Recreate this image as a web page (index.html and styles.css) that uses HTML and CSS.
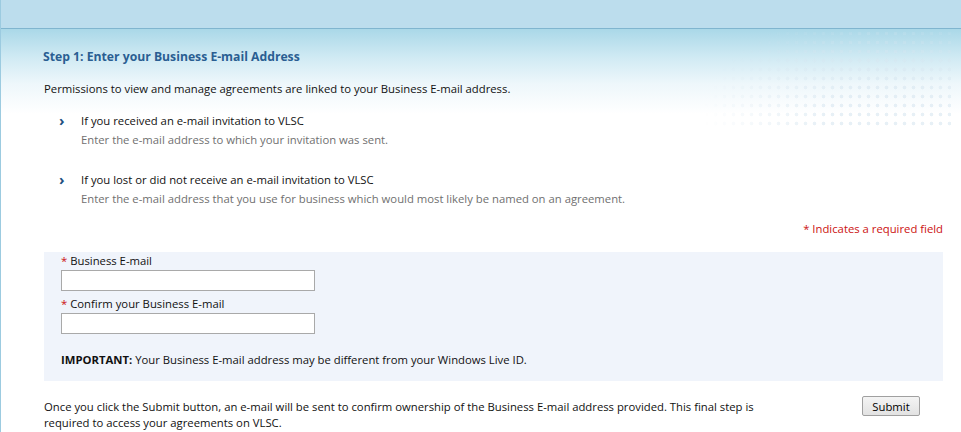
FILE: index.html
```html
<!DOCTYPE html>
<html>
<head>
<meta charset="utf-8">
<link rel="stylesheet" href="styles.css">
</head>
<body>
<div class="topbar"></div>
<div class="content">
  <h1 class="step-title">Step 1: Enter your Business E-mail Address</h1>
  <p class="intro">Permissions to view and manage agreements are linked to your Business E-mail address.</p>
  <ul class="options">
    <li class="option">
      <span class="chev">&#x203A;</span>
      <div class="option-text">
        <div class="option-title">If you received an e-mail invitation to VLSC</div>
        <div class="option-sub">Enter the e-mail address to which your invitation was sent.</div>
      </div>
    </li>
    <li class="option">
      <span class="chev">&#x203A;</span>
      <div class="option-text">
        <div class="option-title">If you lost or did not receive an e-mail invitation to VLSC</div>
        <div class="option-sub">Enter the e-mail address that you use for business which would most likely be named on an agreement.</div>
      </div>
    </li>
  </ul>
  <div class="required-note">* Indicates a required field</div>
  <div class="form-box">
    <label class="field-label"><span class="req">*</span> Business E-mail</label>
    <input class="field-input" type="text">
    <label class="field-label"><span class="req">*</span> Confirm your Business E-mail</label>
    <input class="field-input" type="text">
    <p class="important"><b>IMPORTANT:</b> Your Business E-mail address may be different from your Windows Live ID.</p>
  </div>
  <div class="footer-row">
    <p class="footer-text">Once you click the Submit button, an e-mail will be sent to confirm ownership of the Business E-mail address provided. This final step is required to access your agreements on VLSC.</p>
    <button class="submit-btn" type="button">Submit</button>
  </div>
</div>
</body>
</html>
```
FILE: styles.css
```css
* { box-sizing: border-box; }
html, body { margin: 0; padding: 0; }
body {
  font-family: "Open Sans", "Noto Sans", sans-serif;
  font-size: 11.3px;
  color: #111;
  background: #fff;
  width: 961px;
  height: 432px;
  overflow: hidden;
  border-left: 1px solid #9ccbe0;
}
.topbar {
  height: 29px;
  background: #bcdded;
  border-bottom: 1px solid #80b5cf;
}
.content {
  position: relative;
  padding: 18px 18px 0 42px;
  background: linear-gradient(#aad8e8 0px, #d2ebf4 30px, #eef7fb 55px, #fff 85px);
  background-repeat: no-repeat;
  background-size: 100% 100px;
}
.content::before {
  content: "";
  position: absolute;
  right: 10px;
  top: 0;
  width: 330px;
  height: 100px;
  background-image: radial-gradient(circle, rgba(215,230,240,0.6) 1.6px, transparent 2.1px);
  background-size: 9px 9px;
  -webkit-mask-image: radial-gradient(ellipse 230px 140px at 80% 90%, #000 25%, transparent 80%);
  mask-image: radial-gradient(ellipse 230px 140px at 80% 90%, #000 25%, transparent 80%);
  pointer-events: none;
}
.step-title {
  position: relative;
  margin: 0;
  font-size: 12.2px;
  font-weight: bold;
  color: #2a5e92;
  line-height: 20px;
}
.intro {
  position: relative;
  margin: 14px 0 0 1px;
  line-height: 16px;
}
.options {
  list-style: none;
  margin: 14px 0 13px 0;
  padding: 0 0 0 16px;
}
.option {
  display: flex;
  gap: 15px;
}
.option + .option { margin-top: 21px; }
.chev {
  color: #1e4f80;
  font-size: 15px;
  font-weight: bold;
  line-height: 19px;
  width: 7px;
}
.option-title { line-height: 19px; }
.option-sub { color: #707070; line-height: 19px; }
.required-note {
  text-align: right;
  color: #cc1111;
  line-height: 16px;
}
.form-box {
  margin: 15px 0 0 1px;
  background: #f0f4fb;
  padding: 1px 17px 13px;
  display: flex;
  flex-direction: column;
  align-items: flex-start;
}
.field-label { line-height: 16px; }
.req { color: #cc1111; }
.field-input {
  width: 254px;
  height: 21px;
  border: 1px solid #a9a9a9;
  background: #fff;
  margin: 1px 0 5px;
}
.important {
  margin: 13px 0 0 0;
  line-height: 16px;
}
.footer-row {
  display: flex;
  align-items: flex-start;
  margin-top: 18px;
}
.footer-text {
  margin: 0 0 0 1px;
  width: 730px;
  line-height: 16px;
}
.submit-btn {
  margin-left: 88px;
  margin-top: -3px;
  width: 58px;
  height: 20px;
  font-family: inherit;
  font-size: 11.3px;
  padding: 0;
  border: 1px solid #a0a0a0;
  border-radius: 2px;
  background: linear-gradient(#f4f4f4, #e2e2e2);
  color: #000;
}
```
